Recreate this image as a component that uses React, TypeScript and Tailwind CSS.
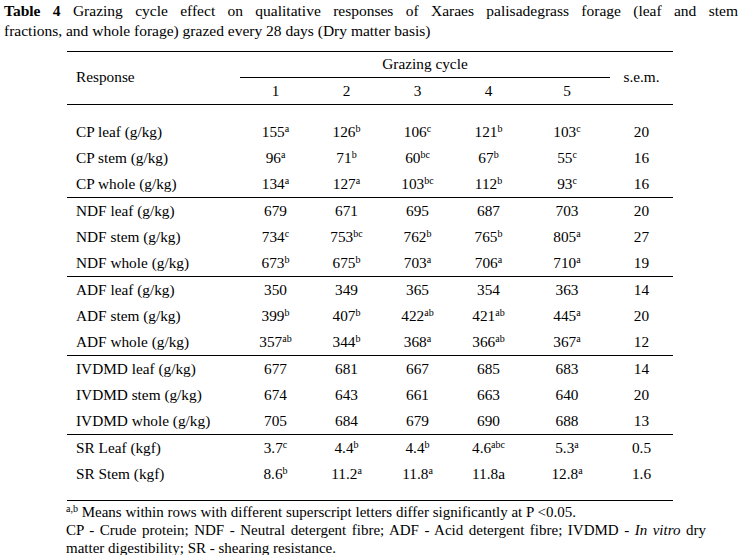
type Cell = [string, string?];
type Row = { label: string; cells: Cell[]; sem: string };

const groups: Row[][] = [
  [
    { label: "CP leaf (g/kg)", cells: [["155", "a"], ["126", "b"], ["106", "c"], ["121", "b"], ["103", "c"]], sem: "20" },
    { label: "CP stem (g/kg)", cells: [["96", "a"], ["71", "b"], ["60", "bc"], ["67", "b"], ["55", "c"]], sem: "16" },
    { label: "CP whole (g/kg)", cells: [["134", "a"], ["127", "a"], ["103", "bc"], ["112", "b"], ["93", "c"]], sem: "16" },
  ],
  [
    { label: "NDF leaf (g/kg)", cells: [["679"], ["671"], ["695"], ["687"], ["703"]], sem: "20" },
    { label: "NDF stem (g/kg)", cells: [["734", "c"], ["753", "bc"], ["762", "b"], ["765", "b"], ["805", "a"]], sem: "27" },
    { label: "NDF whole (g/kg)", cells: [["673", "b"], ["675", "b"], ["703", "a"], ["706", "a"], ["710", "a"]], sem: "19" },
  ],
  [
    { label: "ADF leaf (g/kg)", cells: [["350"], ["349"], ["365"], ["354"], ["363"]], sem: "14" },
    { label: "ADF stem (g/kg)", cells: [["399", "b"], ["407", "b"], ["422", "ab"], ["421", "ab"], ["445", "a"]], sem: "20" },
    { label: "ADF whole (g/kg)", cells: [["357", "ab"], ["344", "b"], ["368", "a"], ["366", "ab"], ["367", "a"]], sem: "12" },
  ],
  [
    { label: "IVDMD leaf (g/kg)", cells: [["677"], ["681"], ["667"], ["685"], ["683"]], sem: "14" },
    { label: "IVDMD stem (g/kg)", cells: [["674"], ["643"], ["661"], ["663"], ["640"]], sem: "20" },
    { label: "IVDMD whole (g/kg)", cells: [["705"], ["684"], ["679"], ["690"], ["688"]], sem: "13" },
  ],
  [
    { label: "SR Leaf (kgf)", cells: [["3.7", "c"], ["4.4", "b"], ["4.4", "b"], ["4.6", "abc"], ["5.3", "a"]], sem: "0.5" },
    { label: "SR Stem (kgf)", cells: [["8.6", "b"], ["11.2", "a"], ["11.8", "a"], ["11.8a"], ["12.8", "a"]], sem: "1.6" },
  ],
];

const cols = "grid grid-cols-[173px_71px_71px_71px_71px_86px_63px]";

function Sup({ children }: { children: React.ReactNode }) {
  return <sup className="text-[10px] top-[-0.55em]">{children}</sup>;
}

function DataRow({ row }: { row: Row }) {
  return (
    <div className={`${cols} h-[26px] items-center`}>
      <div className="pl-[9px]">{row.label}</div>
      {row.cells.map(([v, s], i) => (
        <div key={i} className="text-center">
          {v}
          {s && <Sup>{s}</Sup>}
        </div>
      ))}
      <div className="text-center">{row.sem}</div>
    </div>
  );
}

export default function App() {
  return (
    <div className="w-[741px] h-[555px] overflow-hidden bg-white text-black font-[family-name:'Liberation_Serif',serif]">
      {/* caption */}
      <div className="pt-px pl-[4px] w-[738px] text-[15.5px] leading-[20px]">
        <div className="text-justify [text-align-last:justify]">
          <b>Table 4</b> Grazing cycle effect on qualitative responses of Xaraes palisadegrass forage (leaf and stem
        </div>
        <div>fractions, and whole forage) grazed every 28 days (Dry matter basis)</div>
      </div>

      <div className="ml-[67px] mt-[10px] w-[606px] text-[15.3px] leading-none">
        {/* header */}
        <div className={`${cols} grid-rows-[26px_26px] border-t border-b border-black`}>
          <div className="row-span-2 self-center pl-[9px] pb-[2px]">Response</div>
          <div className="col-span-5 flex items-center justify-center border-b border-black pb-[2px]">
            Grazing cycle
          </div>
          <div className="row-span-2 self-center text-center pb-[2px]">s.e.m.</div>
          {["1", "2", "3", "4", "5"].map((n) => (
            <div key={n} className="flex items-center justify-center">
              {n}
            </div>
          ))}
        </div>

        {/* body */}
        <div className="pt-[14px]">
          {groups.map((g, gi) => (
            <div key={gi} className={gi < groups.length - 1 ? "border-b border-black" : "pb-[13px] border-b border-black"}>
              {g.map((r) => (
                <DataRow key={r.label} row={r} />
              ))}
            </div>
          ))}
        </div>
      </div>

      {/* footnotes */}
      <div className="ml-[66px] w-[640px] pt-[2px] text-[15px] leading-[18px]">
        <div>
          <Sup>a,b</Sup> Means within rows with different superscript letters differ significantly at P &lt;0.05.
        </div>
        <div className="text-justify [text-align-last:justify]">
          CP - Crude protein; NDF - Neutral detergent fibre; ADF - Acid detergent fibre; IVDMD - <i>In vitro</i> dry
        </div>
        <div>matter digestibility; SR - shearing resistance.</div>
      </div>
    </div>
  );
}
